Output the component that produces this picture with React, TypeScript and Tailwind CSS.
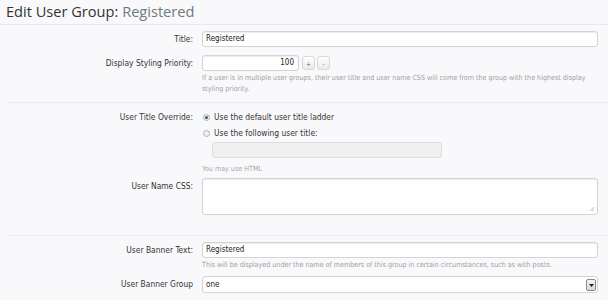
import React from "react"

function Row({ label, children, labelClass = "" }: { label: string; children: React.ReactNode; labelClass?: string }) {
  return (
    <div className="grid grid-cols-[193px_1fr] gap-x-[9px]">
      <div className={`text-right text-[#333] text-[8.4px] leading-[16px] ${labelClass}`}>{label}</div>
      <div>{children}</div>
    </div>
  )
}

function TextBox({ value, className = "" }: { value: string; className?: string }) {
  return (
    <div
      className={`h-[16px] border border-[#d4d4d4] rounded-[3px] bg-white shadow-[inset_0_1px_1px_rgba(0,0,0,0.08)] px-[3px] text-[8px] leading-[14px] text-[#222] ${className}`}
    >
      {value}
    </div>
  )
}

function Radio({ checked, label }: { checked?: boolean; label: string }) {
  return (
    <div className="flex items-center h-[16px] text-[8.4px] text-[#333]">
      <span className="w-[7px] h-[7px] rounded-full border border-[#a9b4bc] bg-[#eef1f3] flex items-center justify-center mr-[4px] ml-[1px]">
        {checked && <span className="w-[3px] h-[3px] rounded-full bg-[#2f5b73]" />}
      </span>
      {label}
    </div>
  )
}

export default function App() {
  return (
    <div className="w-[608px] h-[300px] overflow-hidden bg-[#f9f9fb] font-['DejaVu_Sans',sans-serif] font-stretch-condensed">
      <div className="h-[25px] pl-[6px] pt-[1px] border-b border-[#e3ebf0]">
        <h1 className="font-['Open_Sans',sans-serif] font-stretch-normal text-[14.6px] leading-[21px] text-[#333]">
          Edit User Group: <span className="text-[#6f7a80]">Registered</span>
        </h1>
      </div>

      <div className="pt-[6px] h-[78px] border-b border-[#e8edf0] ml-[8px]">
        <div className="-ml-[8px] flex flex-col gap-[8px]">
          <Row label="Title:">
            <TextBox value="Registered" className="w-[396px]" />
          </Row>
          <Row label="Display Styling Priority:">
            <div className="flex items-center gap-[2px]">
              <TextBox value="100" className="w-[97px] text-right pr-[4px]" />
              <div className="ml-[1px] w-[13px] h-[14px] rounded-[3px] border border-[#d8d8d8] bg-gradient-to-b from-white to-[#e9e9e9] text-[6px] text-[#666] flex items-center justify-center">
                +
              </div>
              <div className="w-[13px] h-[14px] rounded-[3px] border border-[#d8d8d8] bg-gradient-to-b from-white to-[#e9e9e9] text-[6px] text-[#666] flex items-center justify-center">
                -
              </div>
            </div>
            <p className="mt-[1px] text-[7.1px] leading-[11px] text-[#a0a0a0] pr-[12px]">
              If a user is in multiple user groups, their user title and user name CSS will come from the group with the highest display styling priority.
            </p>
          </Row>
        </div>
      </div>

      <div className="pt-[6px] h-[133px] border-b border-[#e8edf0] ml-[8px]">
        <div className="-ml-[8px]">
          <Row label="User Title Override:">
            <Radio checked label="Use the default user title ladder" />
            <Radio label="Use the following user title:" />
            <div className="ml-[10px] mt-[1px] w-[230px] h-[16px] border border-[#dcdcdc] rounded-[3px] bg-[#f0f0f0]" />
            <p className="mt-[6px] text-[7.1px] leading-[10px] text-[#a8a8a8]">You may use HTML</p>
          </Row>
          <div className="mt-[4px]">
            <Row label="User Name CSS:" labelClass="pt-[0px]">
              <div className="relative w-[396px] h-[37px] border border-[#d4d4d4] rounded-[3px] bg-white shadow-[inset_0_1px_1px_rgba(0,0,0,0.08)]">
                <svg className="absolute right-[2px] bottom-[2px]" width="6" height="6" viewBox="0 0 6 6">
                  <path d="M5 1 L1 5 M5 3 L3 5" stroke="#b0b0b0" strokeWidth="0.8" />
                </svg>
              </div>
            </Row>
          </div>
        </div>
      </div>

      <div className="pt-[6px] ml-[8px]">
        <div className="-ml-[8px]">
          <Row label="User Banner Text:">
            <TextBox value="Registered" className="w-[396px]" />
            <p className="mt-[1px] text-[7.1px] leading-[11px] text-[#a0a0a0]">
              This will be displayed under the name of members of this group in certain circumstances, such as with posts.
            </p>
          </Row>
          <div className="mt-[6px]">
            <Row label="User Banner Group">
              <div className="relative w-[396px] h-[17px] border border-[#d4d4d4] rounded-[3px] bg-white px-[3px] text-[8px] leading-[15px] text-[#222]">
                one
                <div className="absolute right-[1px] top-[2px] w-[10px] h-[12px] border border-[#8a8a8a] rounded-[2px] bg-gradient-to-b from-[#f4f4f4] to-[#d6d6d6] flex items-center justify-center">
                  <svg width="5" height="3" viewBox="0 0 5 3">
                    <path d="M0 0 H5 L2.5 3 Z" fill="#222" />
                  </svg>
                </div>
              </div>
            </Row>
          </div>
        </div>
      </div>
    </div>
  )
}
